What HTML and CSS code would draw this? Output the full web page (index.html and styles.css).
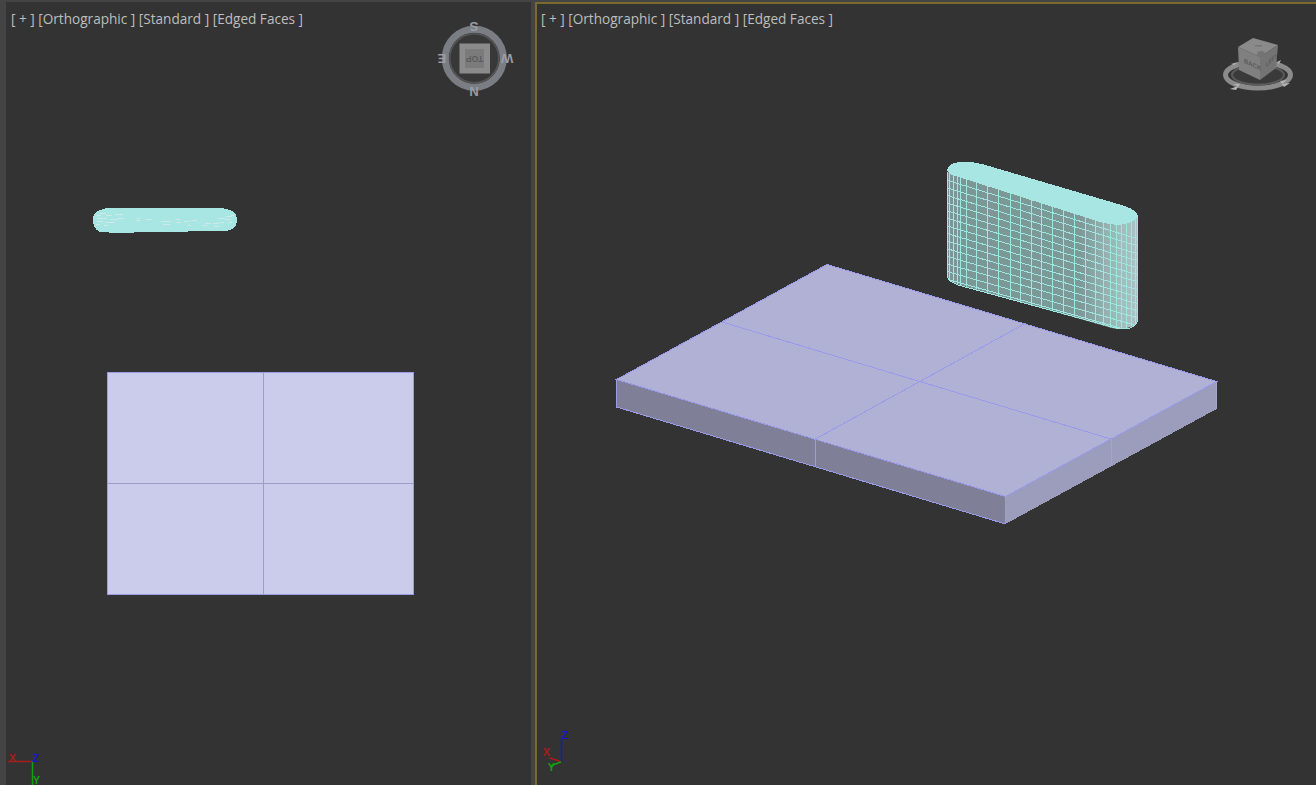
FILE: index.html
```html
<!DOCTYPE html>
<html lang="en">
<head>
    <meta charset="UTF-8">
    <title>Viewports</title>
    <link rel="stylesheet" href="styles.css">
</head>
<body>
    <div class="layout">
        <!-- left viewport, viewBox uses screen coords -->
        <div class="viewport">
            <svg class="scene" viewBox="6 2 525 783">
                <path class="pill" d="M93 220 Q93 212 100 210 L106 208 L220 208 Q237 209 237 220 Q237 230 225 231 L150 232 L118 233 L100 232 Q93 229 93 220 Z"/>
                <path class="speck" d="M97 215h4M100 213h6M106 215h6M115 214h8M97 218h10M110 219h8M118 218h6M97 221h6M105 222h10M96 224h4M104 225h4M136 220h4M137 218h3M146 219h6M161 221h7M163 224h7M168 221h3M176 219h4M176 222h5M184 221h5M191 220h6M188 225h3M203 225h4M205 223h6M213 223h6M214 226h5M220 222h4M218 218h7M225 219h6M228 222h4M226 216h6M231 215h3"/>
                <rect class="plane" x="107.5" y="372.5" width="306" height="222"/>
                <path class="plane-cross" d="M263.5 373V594M108 483.5H413"/>

                <!-- compass and top cube -->
                <circle class="compass-ring" cx="474.3" cy="58.3" r="29"/>
                <circle class="compass-inner" cx="474.3" cy="58.3" r="24.5"/>
                <rect class="cube-outer" x="459.5" y="43.5" width="30.5" height="30"/>
                <rect class="cube-inner" x="465" y="49" width="19" height="19"/>
                <text class="cube-top" transform="rotate(180 474.5 58.5)" x="474.5" y="61.5">TOP</text>
                <text class="compass-letter" transform="rotate(180 474 26)" x="474" y="30.5">S</text>
                <text class="compass-letter" transform="rotate(180 474 91)" x="474" y="95.5">N</text>
                <text class="compass-letter" transform="rotate(180 442 58)" x="442" y="62.5">E</text>
                <text class="compass-letter" transform="rotate(180 507 58)" x="507" y="62.5">W</text>

                <!-- axis tripod -->
                <path class="axis-x" d="M8 761.5H32"/>
                <path class="axis-y" d="M32.5 762V785"/>
                <text class="axis-label x-label" x="12.5" y="762">X</text>
                <text class="axis-label z-label" x="35.5" y="762">Z</text>
                <text class="axis-label y-label" x="36.5" y="784">Y</text>
            </svg>
            <div class="label">[ + ] [Orthographic ] [Standard ] [Edged Faces ]</div>
        </div>

        <!-- right viewport, active -->
        <div class="viewport active">
            <svg class="scene" viewBox="537 4 779 781">
                <defs>
                    <linearGradient id="bodyShade" x1="0" x2="1" y1="0" y2="0">
                        <stop offset="0" stop-color="#7a9796"/>
                        <stop offset="0.7" stop-color="#7d9a99"/>
                        <stop offset="0.9" stop-color="#a0bcba"/>
                        <stop offset="1" stop-color="#a8c4c2"/>
                    </linearGradient>
                    <clipPath id="bodyClip">
                        <path d="M947.500 172 L1137.500 215 V320 Q1136 326 1127 328 Q1120 330 1112 328 L960 285 Q947.500 282 947.500 276 Z"/>
                    </clipPath>
                </defs>

                <!-- slab -->
                <path class="slab-top" d="M827 264.500 L1216.500 381.500 L1005.500 496.500 L616.500 379.500 Z"/>
                <path class="slab-front" d="M616.500 379.500 L1005.500 496.500 V524 L616.500 407 Z"/>
                <path class="slab-side" d="M1005.500 496.500 L1216.500 381.500 V409 L1005.500 524 Z"/>
                <path class="slab-edge" d="M827 264.500 L1216.500 381.500 L1005.500 496.500 L616.500 379.500 Z M616.500 379.500 V407 L1005.500 524 M1005.500 496.500 V524"/>
                <path class="slab-edge" d="M722 322 L1111 439 M1026 323 L815.500 439 M815.500 439 V467"/>
                <path class="slab-faint" d="M1111 439 V466 M1216.500 381.500 V409"/>

                <!-- meshed box -->
                <path fill="url(#bodyShade)" d="M947.500 172 L1137.500 215 V320 Q1136 326 1127 328 Q1120 330 1112 328 L960 285 Q947.500 282 947.500 276 Z"/>
                <g clip-path="url(#bodyClip)">
                    <path class="mesh" d="M949.500 170V290M953.500 170V290M957 170V290M960.500 170V290M966.500 170V295M976.500 170V295M987.500 170V300M998.500 170V300M1010 170V305M1020.500 170V310M1031.500 170V310M1041.500 170V310M1052.500 170V315M1063.500 170V315M1074.500 170V320M1085 170V320M1095 170V325M1103.500 170V330M1110 170V330M1116.500 170V330M1121.500 170V330M1126.500 170V330M1131.500 170V330M1135 170V330"/>
                    <path class="mesh" d="M948 180.600 L1138 239M948 188.200 L1138 246M948 195.800 L1138 254M948 203.400 L1138 261M948 211 L1138 268M948 218.600 L1138 275M948 226.200 L1138 282M948 233.800 L1138 290M948 241.400 L1138 297M948 249 L1138 304M948 256.600 L1138 311M948 264.200 L1138 318M948 271.800 L1138 326M948 279.400 L1138 333"/>
                </g>
                <path class="mesh" d="M947.500 172 V277 Q948 281 958 285 L1112 327 Q1122 330 1130 328 Q1137 325 1137.500 320 V216"/>
                <path class="pill" d="M947 170 Q948 163 960 162 Q970 161 982 164 L1125 206 Q1138 211 1138 217 Q1132 224 1117 225 Q1108 224 1100 222 L968 180 L955 176 Q948 174 947 170 Z"/>

                <!-- view cube -->
                <ellipse class="cube-ring" cx="1258" cy="75" rx="32.500" ry="13"/>
                <ellipse class="cube-ring-in" cx="1258" cy="75" rx="26" ry="9.500"/>
                <path class="vc-top" d="M1238 47 L1253 38 L1278 45 L1260 57 Z"/>
                <path class="vc-left" d="M1238 47 L1260 57 V80 L1239 70 Z"/>
                <path class="vc-right" d="M1260 57 L1278 45 L1276 68 L1260 80 Z"/>
                <ellipse class="vc-blot" cx="1261" cy="54" rx="4" ry="3"/>
                <path class="vc-blot" d="M1255 45h7v1.500h-7z"/>
                <text class="vc-text" transform="matrix(0.92 0.42 0 1 1244 63)">BACK</text>
                <text class="vc-text" transform="matrix(0.7 -0.6 0 1 1266 67)">LEFT</text>
                <path class="vc-arrow" d="M1230 89 L1238 86 L1233 84 L1240 84 L1236 90 Z M1290 83 L1282 84 L1287 80 L1280 81 L1284 87 Z M1231 64 L1238 62 L1234 65 Z M1277 62 L1281 60 L1279 64 Z"/>

                <!-- axis tripod -->
                <path class="axis-z-line" d="M561.500 738V762"/>
                <path class="axis-x" d="M561 762 Q555 759 549 758"/>
                <path class="axis-y" d="M561 762 L550 766"/>
                <text class="axis-label z-label" x="564.500" y="739">Z</text>
                <text class="axis-label x-label" x="546.500" y="756">X</text>
                <text class="axis-label y-label" x="551.500" y="771">Y</text>
            </svg>
            <div class="label">[ + ] [Orthographic ] [Standard ] [Edged Faces ]</div>
        </div>
    </div>
</body>
</html>
```

FILE: styles.css
```css
* {
    margin: 0;
    padding: 0;
    box-sizing: border-box;
}

body {
    background-color: #444;
    overflow: hidden;
}

.layout {
    display: flex;
    gap: 4px;
    width: 1316px;
    height: 785px;
    padding: 2px 0 0 6px;
}

.viewport {
    position: relative;
    width: 525px;
    background-color: #333;
}

.viewport.active {
    flex: 1;
    border-top: 2px solid #7a6a2e;
    border-left: 2px solid #7a6a2e;
}

.scene {
    position: absolute;
    top: 0;
    left: 0;
    width: 100%;
    height: 100%;
}

.label {
    position: relative;
    padding: 8px 0 0 5px;
    font-family: "Open Sans", sans-serif;
    font-size: 13.6px;
    line-height: 18px;
    color: #bebebe;
    white-space: pre;
}

.active .label {
    padding: 6px 0 0 4px;
}

/* geometry */
.pill {
    fill: #a8e6e4;
    shape-rendering: crispEdges;
}

.speck {
    fill: none;
    stroke: #cfe9e7;
    stroke-width: 1;
    shape-rendering: crispEdges;
}

.plane {
    fill: #cbcbec;
    stroke: #9c9ce2;
    stroke-width: 1;
}

.plane-cross {
    fill: none;
    stroke: #9d9dc6;
    stroke-width: 1;
    shape-rendering: crispEdges;
}

.slab-top {
    fill: #b1b1d6;
    shape-rendering: crispEdges;
}

.slab-front {
    fill: #7f7f98;
    shape-rendering: crispEdges;
}

.slab-side {
    fill: #9c9cbc;
    shape-rendering: crispEdges;
}

.slab-edge {
    fill: none;
    stroke: #9a9aea;
    stroke-width: 1;
    shape-rendering: crispEdges;
}

.slab-faint {
    fill: none;
    stroke: #a4a4cc;
    stroke-width: 1;
    shape-rendering: crispEdges;
}

.mesh {
    fill: none;
    stroke: #9fe6e3;
    stroke-width: 1;
    shape-rendering: crispEdges;
}

/* compass */
.compass-ring {
    fill: none;
    stroke: #7a7e84;
    stroke-width: 7;
}

.compass-inner {
    fill: #383838;
    stroke: #565656;
    stroke-width: 1.5;
}

.cube-outer {
    fill: #8b8b8b;
}

.cube-inner {
    fill: #7b7b7b;
}

.cube-top {
    font-family: "Liberation Sans", sans-serif;
    font-size: 8.5px;
    font-weight: bold;
    fill: #5c5c5c;
    text-anchor: middle;
}

.compass-letter {
    font-family: "Liberation Sans", sans-serif;
    font-size: 13px;
    font-weight: bold;
    fill: #9a9da2;
    text-anchor: middle;
}

/* view cube */
.cube-ring {
    fill: none;
    stroke: #8b8b8b;
    stroke-width: 5;
}

.cube-ring-in {
    fill: #3a3a3a;
    stroke: #5a5a5a;
    stroke-width: 2;
}

.vc-top {
    fill: #8a8a8a;
}

.vc-left {
    fill: #808080;
}

.vc-right {
    fill: #747474;
}

.vc-blot {
    fill: #747474;
}

.vc-text {
    font-family: "Liberation Sans", sans-serif;
    font-size: 6.5px;
    font-weight: bold;
    fill: #5a5a5a;
}

.vc-arrow {
    fill: #b4b4b4;
}

/* axis tripods */
.axis-x {
    fill: none;
    stroke: #a81c1c;
    stroke-width: 1.5;
}

.axis-y {
    fill: none;
    stroke: #12a012;
    stroke-width: 1.5;
}

.axis-z-line {
    fill: none;
    stroke: #1818c0;
    stroke-width: 1.5;
}

.axis-label {
    font-family: "Liberation Sans", sans-serif;
    font-size: 11px;
    font-weight: bold;
    text-anchor: middle;
}

.x-label {
    fill: #a81c1c;
}

.y-label {
    fill: #12a012;
}

.z-label {
    fill: #1818c8;
}
```
